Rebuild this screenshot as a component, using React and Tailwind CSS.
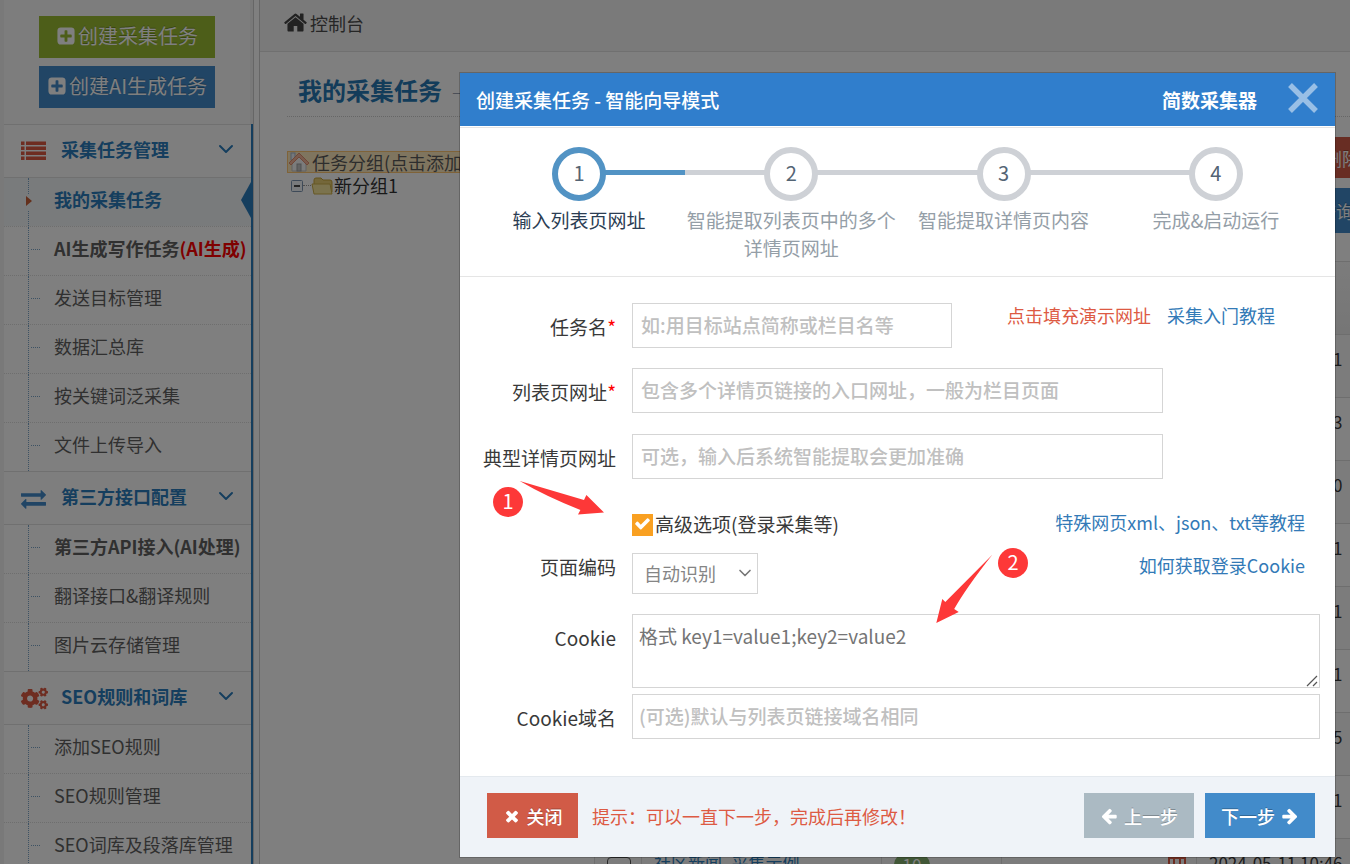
import React from 'react';
import { FaCogs } from 'react-icons/fa';
import { FiChevronDown } from 'react-icons/fi';

const ICONS = {
  plusSquare:
    'M1408 960v-128q0-26-19-45t-45-19h-320v-320q0-26-19-45t-45-19h-128q-26 0-45 19t-19 45v320h-320q-26 0-45 19t-19 45v128q0 26 19 45t45 19h320v320q0 26 19 45t45 19h128q26 0 45-19t19-45v-320h320q26 0 45-19t19-45zm256-544v960q0 119-84.5 203.5t-203.5 84.5h-960q-119 0-203.5-84.5t-84.5-203.5v-960q0-119 84.5-203.5t203.5-84.5h960q119 0 203.5 84.5t84.5 203.5z',
  home:
    'M1472 992v480q0 26-19 45t-45 19h-384v-384h-256v384h-384q-26 0-45-19t-19-45v-480q0-1 .5-3t.5-3l575-474 575 474q1 2 1 6zm223-69l-62 74q-8 9-21 11h-3q-13 0-21-7l-692-577-692 577q-12 8-24 7-13-2-21-11l-62-74q-8-10-7-23.5t11-21.5l719-599q32-26 76-26t76 26l244 204v-195q0-14 9-23t23-9h192q14 0 23 9t9 23v408l219 182q10 8 11 21.5t-7 23.5z',
  exchange:
    'M1792 1184v192q0 13-9.5 22.5t-22.5 9.5h-1376v192q0 13-9.5 22.5t-22.5 9.5q-12 0-24-10l-319-320q-9-9-9-22 0-14 9-23l320-320q9-9 23-9 13 0 22.5 9.5t9.5 22.5v192h1376q13 0 22.5 9.5t9.5 22.5zm0-544q0 14-9 23l-320 320q-9 9-23 9-13 0-22.5-9.5t-9.5-22.5v-192h-1376q-13 0-22.5-9.5t-9.5-22.5v-192q0-13 9.5-22.5t22.5-9.5h1376v-192q0-14 9-23t23-9q12 0 24 10l319 319q9 9 9 23z',
  times:
    'M1490 1322q0 40-28 68l-136 136q-28 28-68 28t-68-28l-294-294-294 294q-28 28-68 28t-68-28l-136-136q-28-28-28-68t28-68l294-294-294-294q-28-28-28-68t28-68l136-136q28-28 68-28t68 28l294 294 294-294q28-28 68-28t68 28l136 136q28 28 28 68t-28 68l-294 294 294 294q28 28 28 68z',
  check:
    'M1671 566q0 40-28 68l-724 724-136 136q-28 28-68 28t-68-28l-136-136-362-362q-28-28-28-68t28-68l136-136q28-28 68-28t68 28l294 295 656-657q28-28 68-28t68 28l136 136q28 28 28 68z',
  arrowLeft:
    'M1664 896v128q0 53-32.5 90.5t-84.5 37.5h-704l293 294q38 36 38 90t-38 90l-75 76q-37 37-90 37-52 0-91-37l-651-652q-37-37-37-90 0-52 37-91l651-650q38-38 91-38 52 0 90 38l75 74q38 38 38 91t-38 91l-293 293h704q52 0 84.5 37.5t32.5 90.5z',
  arrowRight:
    'M1600 960q0 54-37 91l-651 651q-39 37-91 37-51 0-90-37l-75-75q-38-38-38-91t38-91l293-293h-704q-52 0-84.5-37.5t-32.5-90.5v-128q0-53 32.5-90.5t84.5-37.5h704l-293-294q-38-36-38-90t38-90l75-75q38-38 90-38 53 0 91 38l651 651q37 35 37 90z',
};

function Icon({ name, className }) {
  return (
    <svg viewBox="0 0 1792 1792" fill="currentColor" className={className} aria-hidden="true">
      <path d={ICONS[name]} />
    </svg>
  );
}

function ListIcon() {
  return (
    <svg viewBox="0 0 25 20" fill="currentColor" className="w-[25px] h-5" aria-hidden="true">
      {[0, 5, 10, 15].map((y) => (
        <g key={y}>
          <rect x="0" y={y + 0.5} width="3.5" height="3.5" />
          <rect x="5" y={y + 0.5} width="20" height="3.5" />
        </g>
      ))}
    </svg>
  );
}

const groups = [
  {
    title: '采集任务管理',
    icon: <ListIcon />,
    color: 'text-[#dd5a43]',
    items: [
      { label: '我的采集任务', active: true },
      { label: 'AI生成写作任务', extra: '(AI生成)', bold: true },
      { label: '发送目标管理' },
      { label: '数据汇总库' },
      { label: '按关键词泛采集' },
      { label: '文件上传导入' },
    ],
  },
  {
    title: '第三方接口配置',
    icon: <Icon name="exchange" className="w-[25px] h-[25px]" />,
    color: 'text-[#428bca]',
    items: [
      { label: '第三方API接入(AI处理)', bold: true },
      { label: '翻译接口&翻译规则' },
      { label: '图片云存储管理' },
    ],
  },
  {
    title: 'SEO规则和词库',
    icon: <FaCogs className="w-[27px] h-[27px]" />,
    color: 'text-[#dd5a43]',
    items: [{ label: '添加SEO规则' }, { label: 'SEO规则管理' }, { label: 'SEO词库及段落库管理' }],
  },
];

const rows = [
  '2024-05-13 09:21',
  '2024-05-13 09:13',
  '2024-05-12 17:30',
  '2024-05-12 16:11',
  '2024-05-12 15:51',
  '2024-05-12 11:01',
  '2024-05-11 18:25',
  '2024-05-11 14:31',
  '2024-05-11 10:46',
];

const steps = ['输入列表页网址', '智能提取列表页中的多个详情页网址', '智能提取详情页内容', '完成&启动运行'];

function MenuItem({ item }) {
  return (
    <li
      className={`relative h-[49px] first:h-12 border-t border-dotted border-[#dcdcdc] first:border-t-0 ${
        item.active ? 'bg-[#f2f6f9]' : ''
      }`}
    >
      <span className="absolute left-6 top-0 h-full border-l border-dotted border-[#7aa5c9]" />
      {item.active ? (
        <>
          <span className="absolute left-[21px] top-4 h-4 w-2 bg-[#f2f6f9]" />
          <svg viewBox="0 0 6 10" className="absolute left-[22px] top-[18px] w-[6px] h-[10px]">
            <path d="M0 0l6 5-6 5z" fill="#c86139" />
          </svg>
          <svg viewBox="0 0 10 36" className="absolute right-0 top-1 w-[10px] h-9">
            <path d="M10 0v36L0 18z" fill="#2b7dbc" />
          </svg>
        </>
      ) : (
        <span className="absolute left-[27px] top-[22px] w-[9px] border-t border-dotted border-[#7aa5c9]" />
      )}
      <a
        href="#"
        className={`flex h-full items-center pl-[50px] pb-[6px] whitespace-nowrap ${
          item.active ? 'font-bold text-[#2b7dbc]' : item.bold ? 'font-bold text-[#616161]' : 'text-[#616161]'
        }`}
      >
        {item.label}
        {item.extra && <span className="text-[#ff0000]">{item.extra}</span>}
      </a>
    </li>
  );
}

function Sidebar() {
  return (
    <aside className="w-[254px] shrink-0 bg-[#f2f2f2] border-r border-[#cccccc] pl-1 text-lg">
      <div className="h-[124px] mr-[3px] pt-4 flex flex-col items-center gap-2 bg-[#fafafa]">
        <button className="w-44 h-[42px] pb-[2px] flex items-center justify-center gap-[2px] text-xl text-white bg-[#9abc32] [text-shadow:0_-1px_0_rgba(0,0,0,0.25)]">
          <Icon name="plusSquare" className="w-5 h-5" />
          创建采集任务
        </button>
        <button className="w-44 h-[42px] pb-[2px] flex items-center justify-center gap-[2px] text-xl text-white bg-[#428bca] [text-shadow:0_-1px_0_rgba(0,0,0,0.25)]">
          <Icon name="plusSquare" className="w-5 h-5" />
          创建AI生成任务
        </button>
      </div>
      <nav className="border-r-2 border-[#2b7dbc] bg-white">
        {groups.map((group) => (
          <section key={group.title}>
            <button className="w-full h-[54px] pl-[17px] pr-[13px] pb-1 flex items-center border-y border-[#e0e0e0] bg-[#fdfdfd] font-bold text-[#2b7dbc]">
              <span className={`w-10 pt-1 ${group.color}`}>{group.icon}</span>
              <span>{group.title}</span>
              <FiChevronDown className="ml-auto w-6 h-6" />
            </button>
            <ul>
              {group.items.map((item) => (
                <MenuItem key={item.label} item={item} />
              ))}
            </ul>
          </section>
        ))}
      </nav>
    </aside>
  );
}

function TaskTree() {
  return (
    <div className="w-[307px] shrink-0 pt-[14px] text-lg leading-[21px] text-[#333333] whitespace-nowrap">
      <div className="h-[22px] flex items-center gap-[2px] border border-[#ffb951] bg-[#ffe6b0] opacity-80">
        <svg viewBox="0 0 22 20" className="w-[22px] h-5 shrink-0">
          <rect x="3" y="1" width="4" height="7" fill="#e8eef5" stroke="#8fa5c0" />
          <path d="M4 10l7-7 7 7v9H4z" fill="#f4f4f4" stroke="#b5b5b5" />
          <path d="M1 11L11 1l10 10-2 2-8-8-8 8z" fill="#f2a482" stroke="#d9734e" />
          <rect x="9" y="12" width="4" height="7" fill="#b9b9b9" stroke="#8c8c8c" />
        </svg>
        任务分组(点击添加分组)
      </div>
      <div className="mt-[2px] pl-1 flex items-center">
        <svg viewBox="0 0 12 12" className="w-3 h-3">
          <rect x="0.5" y="0.5" width="11" height="11" rx="1" fill="#f3f6fa" stroke="#7d94b0" />
          <path d="M3 6h6" stroke="#222222" strokeWidth="1.6" />
        </svg>
        <span className="w-2 border-t border-dotted border-[#999999]" />
        <svg viewBox="0 0 22 18" className="w-[22px] h-[18px] mr-px">
          <path d="M3 15V3q0-2 2-2h5l2 2h7q2 0 2 2v10z" fill="#e8cf74" stroke="#c9a53a" />
          <path d="M1 7h18l2 10H3z" fill="#f7e79c" stroke="#cdb04c" />
        </svg>
        新分组1
      </div>
    </div>
  );
}

function TaskTable() {
  return (
    <div className="w-[780px] shrink-0 text-lg">
      <div className="flex flex-col items-end gap-[10px]">
        <button className="h-[41px] px-[14px] text-white bg-[#d15b47] [text-shadow:0_-1px_0_rgba(0,0,0,0.25)]">删除</button>
        <button className="h-[45px] px-5 text-white bg-[#428bca] [text-shadow:0_-1px_0_rgba(0,0,0,0.25)]">查询</button>
      </div>
      <table className="mt-7 w-full table-fixed border-collapse border border-[#dddddd]">
        <thead>
          <tr className="h-[73px] bg-gradient-to-b from-[#f8f8f8] to-[#ececec] text-left">
            <th className="w-[47px]" />
            <th className="w-60" />
            <th className="w-[120px]" />
            <th className="w-[195px]" />
            <th />
          </tr>
        </thead>
        <tbody>
          {rows.map((date) => (
            <tr key={date} className="h-[63px] align-top text-[17px] leading-6 odd:bg-[#f9f9f9]">
              <td className="border border-[#dddddd] pl-3 pt-[18px]">
                <input
                  type="checkbox"
                  aria-label={date}
                  className="block w-6 h-6 appearance-none rounded-sm border border-[#555555]"
                />
              </td>
              <td className="border border-[#dddddd] px-3 pt-3">
                <a href="#" className="text-[#2b7dbc]">社区新闻_采集示例</a>
              </td>
              <td className="border border-[#dddddd] px-3 pt-[14px]">
                <span className="block w-9 rounded-full bg-[#82af6f] text-center text-white">10</span>
              </td>
              <td className="border border-[#dddddd] pr-[10px] pt-[18px]">
                <svg viewBox="0 0 18 20" className="ml-auto w-[18px] h-5" fill="none" stroke="#dd5a43" strokeWidth="2">
                  <path d="M1 1h16v18H1zM6 1v18M12 1v18" />
                </svg>
              </td>
              <td className="border border-[#dddddd] px-3 pt-3 text-[#393939]">{date}</td>
            </tr>
          ))}
        </tbody>
      </table>
    </div>
  );
}

function Steps() {
  return (
    <ol className="flex h-[149px] px-[13px] pt-[19px] border-b border-[#e5e5e5]">
      {steps.map((label, i) => (
        <li key={label} className="relative flex-1 text-center text-[19px] leading-7">
          <span
            className={`absolute top-[23px] h-[5px] ${
              i === 0
                ? 'left-1/2 right-0 bg-[#5293c4]'
                : i === steps.length - 1
                  ? 'left-0 right-1/2 bg-[#ced1d6]'
                  : 'inset-x-0 bg-[#ced1d6]'
            }`}
          />
          <span
            className={`relative mx-auto flex w-[54px] h-[54px] pb-[2px] items-center justify-center rounded-full border-[6px] bg-white text-xl text-[#546474] ${
              i === 0 ? 'border-[#5293c4]' : 'border-[#ced1d6]'
            }`}
          >
            {i + 1}
          </span>
          <span className={`mt-[5px] block ${i === 0 ? 'text-[#2b3d53]' : 'text-[#949ea7]'}`}>{label}</span>
        </li>
      ))}
    </ol>
  );
}

function Row({ label, id, required, className = '', labelClass = 'mt-[10px]', children }) {
  return (
    <div className={`flex items-start gap-4 ${className}`}>
      <label htmlFor={id} className={`w-[156px] shrink-0 text-right leading-7 text-[#393939] ${labelClass}`}>
        {label}
        {required && <span className="text-[#ff0000]">*</span>}
      </label>
      {children}
    </div>
  );
}

const inputClass =
  'h-[45px] pb-[2px] border border-[#d5d5d5] bg-white text-[#858585] placeholder:font-medium placeholder:text-[#c0c0c0] outline-none';

function TaskForm() {
  return (
    <form className="pt-[26px] pr-[15px] pb-[37px] text-[19px]">
      <Row label="任务名" id="name" required>
        <input id="name" placeholder="如:用目标站点简称或栏目名等" className={`${inputClass} w-80 px-2`} />
        <div className="ml-auto mr-[45px] flex gap-4 text-lg leading-6">
          <a href="#" className="text-[#dd5a43]">点击填充演示网址</a>
          <a href="#" className="text-[#337ab7]">采集入门教程</a>
        </div>
      </Row>
      <Row label="列表页网址" id="list-url" required className="mt-5">
        <input
          id="list-url"
          placeholder="包含多个详情页链接的入口网址，一般为栏目页面"
          className={`${inputClass} w-[531px] px-2`}
        />
      </Row>
      <Row label="典型详情页网址" id="detail-url" className="mt-[21px]">
        <input id="detail-url" placeholder="可选，输入后系统智能提取会更加准确" className={`${inputClass} w-[531px] px-2`} />
      </Row>
      <div className="mt-[35px] h-[22px] pl-[172px] pr-[15px] flex items-center">
        <label className="relative flex items-center gap-[2px] text-[#393939]">
          <input type="checkbox" defaultChecked className="w-[21px] h-[22px] appearance-none bg-[#f9a021]" />
          <Icon name="check" className="absolute left-[2px] top-[5px] w-[17px] h-[17px] text-white" />
          <span className="pb-[2px]">高级选项(登录采集等)</span>
        </label>
        <a href="#" className="ml-auto pb-[6px] text-lg text-[#337ab7]">特殊网页xml、json、txt等教程</a>
      </div>
      <Row label="页面编码" id="charset" className="mt-[17px]" labelClass="">
        <div className="relative">
          <select
            id="charset"
            className="w-[126px] h-[41px] pl-[11px] pb-[2px] appearance-none border border-[#d5d5d5] bg-white text-lg text-[#858585]"
          >
            <option>自动识别</option>
          </select>
          <FiChevronDown className="absolute right-[3px] top-[10px] w-5 h-5 text-[#777777] pointer-events-none" />
        </div>
        <a href="#" className="ml-auto mr-[15px] text-lg leading-6 text-[#337ab7]">如何获取登录Cookie</a>
      </Row>
      <Row label="Cookie" id="cookie" className="mt-5">
        <div className="relative flex-1">
          <textarea
            id="cookie"
            placeholder="格式 key1=value1;key2=value2"
            className="block w-full h-[74px] px-[6px] py-[7px] leading-7 resize-none border border-[#d5d5d5] placeholder:text-[#757575] outline-none"
          />
          <svg viewBox="0 0 12 12" className="absolute right-[2px] bottom-[1px] w-3 h-3" stroke="#555555" strokeWidth="1.2">
            <path d="M1 11L11 1M7 11l4-4" strokeDasharray="none" />
          </svg>
        </div>
      </Row>
      <Row label="Cookie域名" id="cookie-domain" className="mt-[6px]">
        <input id="cookie-domain" placeholder="(可选)默认与列表页链接域名相同" className={`${inputClass} flex-1 px-[6px]`} />
      </Row>
    </form>
  );
}

function Marker({ number, className }) {
  return (
    <span
      className={`absolute flex w-[30px] h-[30px] pb-[2px] items-center justify-center rounded-full bg-[#fd3838] text-xl text-white ${className}`}
    >
      {number}
    </span>
  );
}

function WizardModal() {
  return (
    <div className="absolute inset-0 flex items-start justify-end bg-black/50 pt-[72px] pr-[14px]">
      <div
        role="dialog"
        aria-label="创建采集任务"
        className="relative w-full max-w-[877px] border border-black/20 bg-white bg-clip-padding"
      >
        <header className="h-[53px] pl-4 pr-[17px] flex items-center bg-[#307ecc] text-[19px] text-white">
          <h2 className="pt-[2px] font-medium">创建采集任务 - 智能向导模式</h2>
          <span className="ml-auto mr-[31px] pt-[2px] font-bold">简数采集器</span>
          <button aria-label="关闭" className="pb-[3px] text-white/50">
            <svg viewBox="0 0 30 30" className="w-[30px] h-[30px]" stroke="currentColor" strokeWidth="5.4">
              <path d="M2 2l26 26M28 2L2 28" fill="none" />
            </svg>
          </button>
        </header>
        <div className="mt-px border-t border-[#e5e5e5]">
          <Steps />
        </div>
        <TaskForm />
        <footer className="h-[81px] pl-[27px] pr-5 pb-[3px] flex items-center border-t border-[#e4e9ee] bg-[#eff3f8] text-lg">
          <button className="w-[91px] h-[45px] flex items-center justify-center gap-[6px] bg-[#d15b47] font-medium text-white [text-shadow:0_-1px_0_rgba(0,0,0,0.25)]">
            <Icon name="times" className="w-[18px] h-[18px]" />
            关闭
          </button>
          <p className="ml-[14px] text-[#dd5a43]">提示：可以一直下一步，完成后再修改！</p>
          <button className="ml-auto w-[110px] h-[45px] flex items-center justify-center gap-[6px] bg-[#abbac3] font-medium text-white [text-shadow:0_-1px_0_rgba(0,0,0,0.25)]">
            <Icon name="arrowLeft" className="w-[18px] h-[18px]" />
            上一步
          </button>
          <button className="ml-[11px] w-[110px] h-[45px] flex items-center justify-center gap-[6px] bg-[#428bca] font-medium text-white [text-shadow:0_-1px_0_rgba(0,0,0,0.25)]">
            下一步
            <Icon name="arrowRight" className="w-[18px] h-[18px]" />
          </button>
        </footer>

        <Marker number="1" className="left-[33px] top-[414px]" />
        <svg viewBox="0 0 85 35" className="absolute left-[59px] top-[407px] w-[85px] h-[35px]" fill="#fd3838">
          <path d="M0.7 1L65 20l2.400-5L85 32.500l-26 2 2.400-4.600Q28 17 0.700 1z" />
        </svg>
        <Marker number="2" className="left-[538px] top-[475px]" />
        <svg viewBox="0 0 57 70" className="absolute left-[476px] top-[481px] w-[57px] h-[70px]" fill="#fd3838">
          <path d="M56.300 0.700L9.300 48l-3-3L0.300 69l22.400-11-4.500-3Q30 34 56.300 0.700z" />
        </svg>
      </div>
    </div>
  );
}

export default function App() {
  return (
    <div
      lang="zh-CN"
      className="relative flex h-screen overflow-hidden bg-white font-['Noto_Sans_CJK_SC','Liberation_Sans',sans-serif]"
    >
      <Sidebar />
      <main className="ml-[5px] flex-1 min-w-0 overflow-hidden border-l border-[#cccccc]">
        <div className="h-[52px] pl-[23px] pb-[6px] flex items-center gap-[2px] border-b border-[#e0e0e0] bg-[#f5f5f5] text-lg text-[#4c4c4c]">
          <Icon name="home" className="w-[25px] h-[25px] text-[#444444]" />
          控制台
        </div>
        <div className="pl-[27px]">
          <h1 className="h-[65px] pl-[11px] pt-5 border-b border-dotted border-[#cccccc] text-2xl leading-9 font-bold text-[#2679b5]">
            我的采集任务 <span className="ml-1 text-lg font-normal text-[#8089a0]">—</span>
          </h1>
          <div className="flex pt-5">
            <TaskTree />
            <TaskTable />
          </div>
        </div>
      </main>
      <WizardModal />
    </div>
  );
}
